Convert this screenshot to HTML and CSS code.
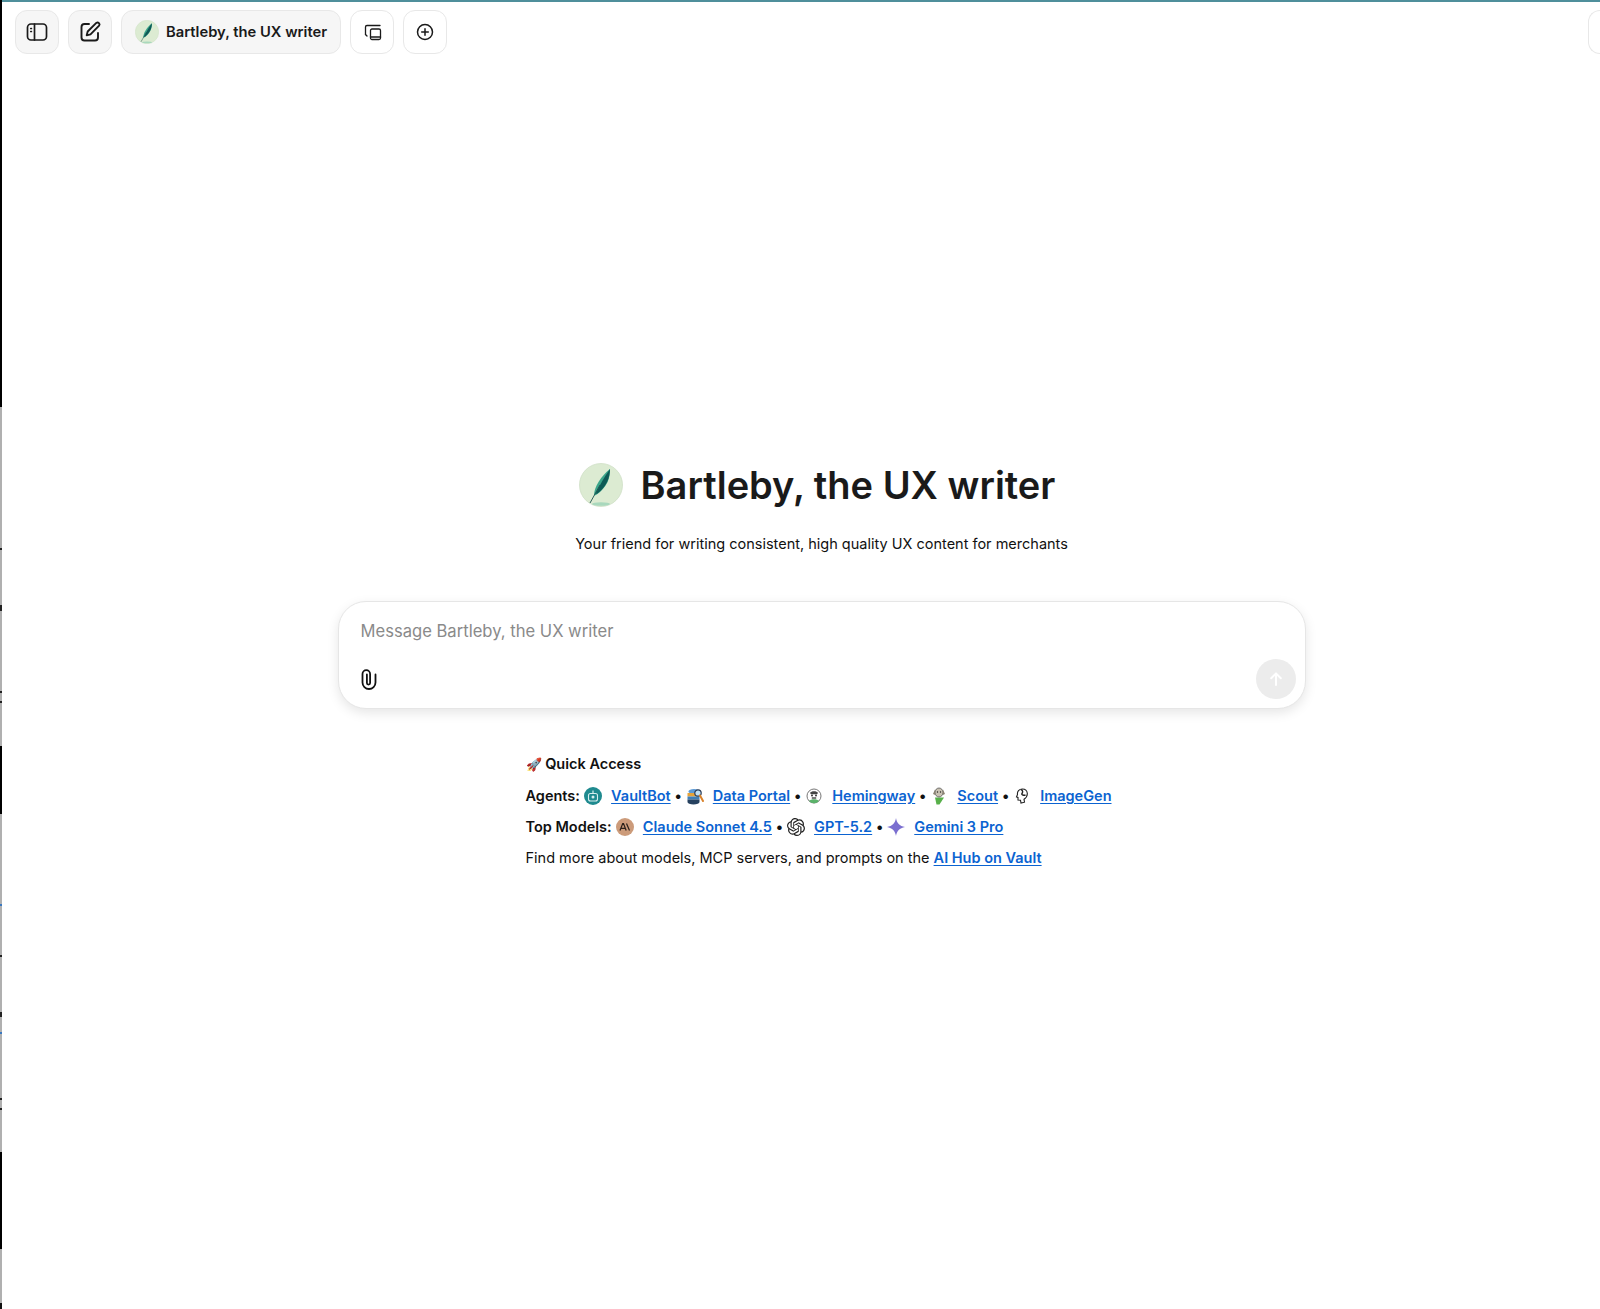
FILE: index.html
```html
<!DOCTYPE html>
<html lang="en">
<head>
<meta charset="utf-8">
<title>Bartleby, the UX writer</title>
<link rel="stylesheet" href="styles.css">
</head>
<body>
<div class="app">
  <div class="edge"></div>
  <div class="page">
    <header class="toolbar">
      <div class="tools-left">
        <button class="tool tool-filled" aria-label="Toggle sidebar">
          <svg width="24" height="24" viewBox="0 0 24 24" fill="none" stroke="#1a1a1a" stroke-width="1.7" stroke-linecap="round" stroke-linejoin="round"><rect x="2.500" y="4" width="19" height="16" rx="3.500"/><path d="M9.500 4v16"/><path d="M5.800 8.500h.6M5.800 11.500h.6"/></svg>
        </button>
        <button class="tool tool-filled" aria-label="New chat">
          <svg width="24" height="24" viewBox="0 0 24 24" fill="none" stroke="#1a1a1a" stroke-width="1.9" stroke-linecap="round" stroke-linejoin="round"><path d="M11 4H6.500A3 3 0 0 0 3.500 7v10.500a3 3 0 0 0 3 3H17a3 3 0 0 0 3-3V13"/><path d="M18.300 2.900a2 2 0 0 1 2.800 2.800L12.500 14.300l-3.800 1 1-3.800z"/></svg>
        </button>
        <button class="tool tool-filled tool-name">
          <svg width="24" height="24" viewBox="0 0 44 44"><use href="#feather"/></svg>
          <span>Bartleby, the UX writer</span>
        </button>
        <button class="tool" aria-label="Copy">
          <svg width="20" height="20" viewBox="0 0 20 20" fill="none" stroke="#1a1a1a" stroke-width="1.300" stroke-linecap="round" stroke-linejoin="round"><path d="M18 3.500H5A1.500 1.500 0 0 0 3.500 5v7.500"/><path d="M3.500 12.500 5 14"/><rect x="8.500" y="7" width="10" height="10.500" rx="1.500"/><path d="M8.500 15h10"/></svg>
        </button>
        <button class="tool" aria-label="Add">
          <svg width="20" height="20" viewBox="0 0 20 20" fill="none" stroke="#1a1a1a" stroke-width="1.500" stroke-linecap="round"><circle cx="10" cy="10" r="7.500"/><path d="M10 6.700v6.600M6.700 10h6.600"/></svg>
        </button>
      </div>
      <div class="tool tool-clipped"></div>
    </header>

    <main class="center">
      <div class="heading">
        <svg width="44" height="44" viewBox="0 0 44 44"><use href="#feather"/></svg>
        <h1>Bartleby, the UX writer</h1>
      </div>
      <p class="tagline">Your friend for writing consistent, high quality UX content for merchants</p>

      <section class="composer">
        <div class="placeholder">Message Bartleby, the UX writer</div>
        <div class="composer-actions">
          <svg class="clip" width="24" height="24" viewBox="0 0 24 24" fill="none" stroke="#111" stroke-width="1.800" stroke-linecap="round"><path d="M18.500 7.500v8a6.500 6.500 0 0 1-13 0V7a3.800 3.800 0 0 1 7.600 0v9a1.600 1.600 0 0 1-3.200 0V7.500"/></svg>
          <button class="send" aria-label="Send">
            <svg width="20" height="20" viewBox="0 0 20 20" fill="none" stroke="#fff" stroke-width="2" stroke-linecap="round" stroke-linejoin="round"><path d="M10 16V4.500M5.200 9.200 10 4.400l4.800 4.800"/></svg>
          </button>
        </div>
      </section>

      <section class="quick">
        <p><strong class="qa-title"><span class="emoji">🚀</span> Quick Access</strong></p>
        <p><strong>Agents:</strong>
          <svg class="ico ico-after" viewBox="0 0 18 18"><circle cx="9" cy="9" r="9" fill="#1f8a8f"/><rect x="4.500" y="6.500" width="9" height="7.500" rx="2" fill="none" stroke="#d7eeee" stroke-width="1.100"/><path d="M9 3.500v3" stroke="#d7eeee" stroke-width="1.200"/><circle cx="9" cy="10" r="1.500" fill="#d7eeee"/></svg>
          <a href="#">VaultBot</a> <b class="dot">•</b>
          <svg class="ico ico-after" viewBox="0 0 18 18"><ellipse cx="8" cy="4.500" rx="5.500" ry="2.500" fill="#5d9bd6"/><path d="M1.500 6h12v3.500h-12z" fill="#e5a33a"/><path d="M1.500 9.500h12v3h-12z" fill="#3f7fb8"/><path d="M1.500 12.500h12v2.500a5 2 0 0 1-12 0z" fill="#26415f"/><circle cx="12" cy="6" r="3.200" fill="#bfe0f5" stroke="#2a3b55" stroke-width="1.200"/><path d="m14 8.500 3 5.500" stroke="#d9822b" stroke-width="2" stroke-linecap="round"/></svg>
          <a href="#">Data Portal</a> <b class="dot">•</b>
          <svg class="ico ico-after" viewBox="0 0 18 18"><circle cx="9" cy="9" r="7" fill="#fff" stroke="#777" stroke-width="1"/><path d="M4 14a6.500 6.500 0 0 0 10 0c-2-2.500-8-2.500-10 0z" fill="#5bb26a"/><path d="M5 6c1-2.500 7-2.500 8 0l-1 1.200H6z" fill="#444"/><circle cx="7" cy="8.500" r=".9" fill="#222"/><circle cx="11" cy="8.500" r=".9" fill="#222"/><path d="M6.800 11h4.400" stroke="#222" stroke-width="1.200"/></svg>
          <a href="#">Hemingway</a> <b class="dot">•</b>
          <svg class="ico ico-after" viewBox="0 0 18 18"><path d="M5 10.500h9L9.500 17.500H6.500z" fill="#58b04a"/><ellipse cx="9" cy="5.500" rx="4" ry="4.500" fill="#c9c2b2" stroke="#555" stroke-width=".8"/><path d="M5 2.500 3 7l2.200 1zM13 2.500 15 7l-2.200 1z" fill="#8a8170"/><circle cx="7.500" cy="5" r=".7" fill="#222"/><circle cx="10.500" cy="5" r=".7" fill="#222"/></svg>
          <a href="#">Scout</a> <b class="dot">•</b>
          <svg class="ico ico-after" viewBox="0 0 18 18"><path d="M9.500 2C6 2 4 4.500 4.500 7.500L3.500 10l1.500.5V13l2.500.3.500 2.700 3.500-.8-.5-3c2.500-1.500 3.500-3.200 3.300-6C14 3.800 12 2 9.500 2z" fill="#fff" stroke="#222" stroke-width="1.100"/><path d="M8 2.500c2 1 2 2.500 1 4s2 2 3.500 1.500" fill="none" stroke="#222" stroke-width="1.400"/></svg>
          <a href="#">ImageGen</a>
        </p>
        <p><strong>Top Models:</strong>
          <svg class="ico ico-after" viewBox="0 0 18 18"><circle cx="9" cy="9" r="9" fill="#cc9b7a"/><path d="M4 12.500 6.700 5.500h.8l2.700 7M5 10.300h4.200M10.500 5.500l3 7" fill="none" stroke="#2b211b" stroke-width="1.200"/></svg>
          <a href="#">Claude Sonnet 4.5</a> <b class="dot">•</b>
          <svg class="ico ico-after" viewBox="0 0 24 24" fill="#222"><path d="M22.2819 9.8211a5.9847 5.9847 0 0 0-.5157-4.9108 6.0462 6.0462 0 0 0-6.5098-2.9A6.0651 6.0651 0 0 0 4.9807 4.1818a5.9847 5.9847 0 0 0-3.9977 2.9 6.0462 6.0462 0 0 0 .7427 7.0966 5.98 5.98 0 0 0 .511 4.9107 6.051 6.051 0 0 0 6.5146 2.9001A5.9847 5.9847 0 0 0 13.2599 24a6.0557 6.0557 0 0 0 5.7718-4.2058 5.9894 5.9894 0 0 0 3.9977-2.9001 6.0557 6.0557 0 0 0-.7475-7.0729zm-9.022 12.6081a4.4755 4.4755 0 0 1-2.8764-1.0408l.1419-.0804 4.7783-2.7582a.7948.7948 0 0 0 .3927-.6813v-6.7369l2.02 1.1686a.071.071 0 0 1 .038.052v5.5826a4.504 4.504 0 0 1-4.4945 4.4944zm-9.6607-4.1254a4.4708 4.4708 0 0 1-.5346-3.0137l.142.0852 4.783 2.7582a.7712.7712 0 0 0 .7806 0l5.8428-3.3685v2.3324a.0804.0804 0 0 1-.0332.0615L9.74 19.9502a4.4992 4.4992 0 0 1-6.1408-1.6464zM2.3408 7.8956a4.485 4.485 0 0 1 2.3655-1.9728V11.6a.7664.7664 0 0 0 .3879.6765l5.8144 3.3543-2.0201 1.1685a.0757.0757 0 0 1-.071 0l-4.8303-2.7865A4.504 4.504 0 0 1 2.3408 7.872zm16.5963 3.8558L13.1038 8.364 15.1192 7.2a.0757.0757 0 0 1 .071 0l4.8303 2.7913a4.4944 4.4944 0 0 1-.6765 8.1042v-5.6772a.79.79 0 0 0-.407-.667zm2.0107-3.0231l-.142-.0852-4.7735-2.7818a.7759.7759 0 0 0-.7854 0L9.409 9.2297V6.8974a.0662.0662 0 0 1 .0284-.0615l4.8303-2.7866a4.4992 4.4992 0 0 1 6.6802 4.66zM8.3065 12.863l-2.02-1.1638a.0804.0804 0 0 1-.038-.0567V6.0742a4.4992 4.4992 0 0 1 7.3757-3.4537l-.142.0805L8.704 5.459a.7948.7948 0 0 0-.3927.6813zm1.0976-2.3654l2.602-1.4998 2.6069 1.4998v2.9994l-2.5974 1.4997-2.6067-1.4997Z"/></svg>
          <a href="#">GPT-5.2</a> <b class="dot">•</b>
          <svg class="ico ico-after" viewBox="0 0 18 18"><path d="M9 0c.8 5 3.500 8 9 9-5.500 1-8.200 4-9 9-.8-5-3.500-8-9-9 5.500-1 8.200-4 9-9z" fill="#7b6fd0"/></svg>
          <a href="#">Gemini 3 Pro</a>
        </p>
        <p>Find more about models, MCP servers, and prompts on the <a href="#">AI Hub on Vault</a></p>
      </section>
    </main>
  </div>
</div>

<svg class="defs" width="0" height="0" aria-hidden="true">
  <defs>
    <g id="feather">
      <circle cx="22" cy="22" r="21.500" fill="#dcebd2" stroke="#cfe0c6" stroke-width=".8"/>
      <ellipse cx="22" cy="41" rx="9" ry="1.800" fill="#a9d8bd"/>
      <path d="M15 32.500C15 24 22 13 31 6c.5 8-3 19-14 26z" fill="#3aa58a"/>
      <path d="M16.500 31C20.500 23 25 14 31 6c-.3 8-3 17.500-12.500 24.500z" fill="#0e5a56"/>
      <path d="M11 40 21 22" stroke="#1d4f4d" stroke-width=".9" fill="none"/>
    </g>
  </defs>
</svg>
</body>
</html>
```

FILE: styles.css
```css
* { box-sizing: border-box; }
html, body { margin: 0; height: 100%; }
body {
  background: #fff;
  color: #111;
  font-family: Inter, "Liberation Sans", sans-serif;
  overflow: hidden;
}
.app { display: flex; height: 1309px; }
.edge {
  width: 2px;
  flex: none;
  background: linear-gradient(to bottom,
    #000 0, #000 407px,
    #b0b0b0 407px, #b0b0b0 548px, #222 548px, #222 550px,
    #b0b0b0 550px, #b0b0b0 605px, #222 605px, #222 611px,
    #b0b0b0 611px, #b0b0b0 691px, #222 691px, #222 693px,
    #b0b0b0 693px, #b0b0b0 701px, #222 701px, #222 703px,
    #b0b0b0 703px, #b0b0b0 746px, #000 746px, #000 814px,
    #b0b0b0 814px, #b0b0b0 904px, #3a78c0 904px, #3a78c0 906px,
    #b0b0b0 906px, #b0b0b0 955px, #222 955px, #222 957px,
    #b0b0b0 957px, #b0b0b0 1012px, #222 1012px, #222 1017px,
    #b0b0b0 1017px, #b0b0b0 1032px, #3a78c0 1032px, #3a78c0 1034px,
    #b0b0b0 1034px, #b0b0b0 1098px, #222 1098px, #222 1100px,
    #b0b0b0 1100px, #b0b0b0 1108px, #222 1108px, #222 1110px,
    #b0b0b0 1110px, #b0b0b0 1152px, #000 1152px, #000 1249px,
    #b0b0b0 1249px, #b0b0b0 1303px, #111 1303px);
}
.page {
  flex: 1;
  min-width: 0;
  border-top: 2px solid #4f8f9b;
  display: flex;
  flex-direction: column;
}
.toolbar {
  display: flex;
  justify-content: space-between;
  padding: 8px 0 0 13px;
  height: 240px;
}
.tools-left { display: flex; gap: 9px; align-items: flex-start; }
.tool {
  width: 44px;
  height: 44px;
  flex: none;
  display: flex;
  align-items: center;
  justify-content: center;
  padding: 0;
  background: #fff;
  border: 1px solid #e8e8e8;
  border-radius: 12px;
  font: inherit;
  color: inherit;
}
.tool-filled { background: #f6f6f6; }
.tool-name {
  width: auto;
  padding: 0 13px;
  gap: 7px;
  font-size: 14.750px;
  font-weight: 600;
  color: #1a1a1a;
  white-space: nowrap;
}
.tool-clipped {
  width: 12px;
  border-right: 0;
  border-radius: 12px 0 0 12px;
}
.center {
  display: flex;
  flex-direction: column;
  align-items: center;
  padding-top: 219px;
  margin-left: 41px;
}
.heading { display: flex; align-items: center; gap: 18px; height: 48px; margin-right: 9px; }
.heading h1 {
  margin: 0;
  font-size: 38px;
  font-weight: 600;
  line-height: 44px;
  color: #1a1a1a;
}
.tagline {
  margin: 24px 0 0;
  font-size: 14.500px;
  line-height: 22px;
  color: #111;
}
.composer {
  width: 968px;
  height: 108px;
  margin-top: 46px;
  background: #fff;
  border: 1px solid #e6e6e6;
  border-radius: 28px;
  box-shadow: 0 4px 12px rgba(0, 0, 0, .1);
  padding: 18px 9px 9px 22px;
  display: flex;
  flex-direction: column;
  justify-content: space-between;
}
.placeholder { font-size: 16.600px; line-height: 22px; color: #8a8a8a; }
.composer-actions { display: flex; justify-content: space-between; align-items: center; }
.clip { margin-left: -4px; }
.send {
  width: 40px;
  height: 40px;
  padding: 0;
  border: 0;
  border-radius: 50%;
  background: #ececec;
  display: flex;
  align-items: center;
  justify-content: center;
}
.quick {
  width: 592px;
  margin-top: 39px;
  font-size: 14.500px;
  line-height: 31px;
  color: #111;
}
.quick p { margin: 0; white-space: nowrap; }
.quick strong { font-weight: 600; }
.quick a { color: #0b63d1; font-weight: 600; text-decoration: underline; text-underline-offset: 2px; }
.dot { font-weight: 700; }
.emoji { font-family: "DejaVu Sans", sans-serif; font-size: 13px; }
.ico { width: 18px; height: 18px; vertical-align: -4px; }
.ico-after { margin-right: 5px; }
.defs { position: absolute; }
```
